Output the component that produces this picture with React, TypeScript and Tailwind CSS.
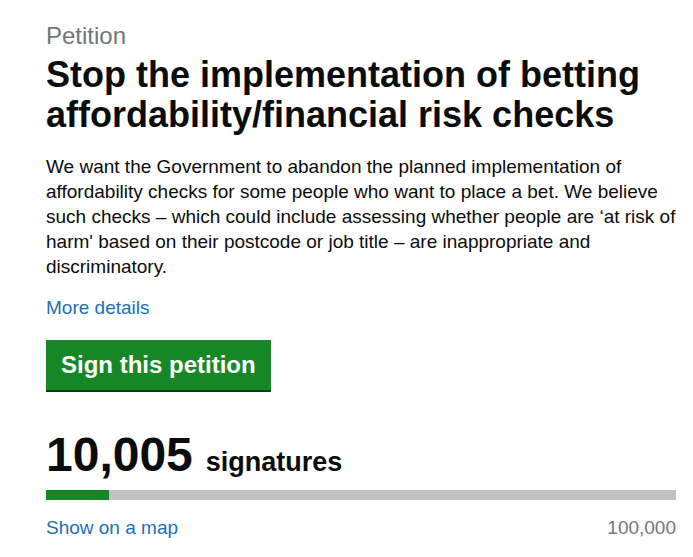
// Petition page header: title, summary, sign button and signature progress
const SIGNATURES = 10005;
const TARGET = 100000;

function SignatureCount() {
  const percent = Math.min(100, (SIGNATURES / TARGET) * 100);
  return (
    <div>
      <div className="mt-[41px] flex items-baseline text-[#0b0c0c]">
        <span className="text-[48px] font-bold leading-[48px]">{SIGNATURES.toLocaleString('en-GB')}</span>
        <span className="ml-[13px] text-[27px] font-bold leading-[30px]">signatures</span>
      </div>
      <div className="mt-[11px] h-[10px] w-full bg-[#bfc1c3]">
        <div className="h-full bg-[#178726]" style={{ width: `${percent}%` }}></div>
      </div>
      <div className="mt-[15px] flex justify-between text-[19px] leading-[25px]">
        <a href="#" className="text-[#1d70b8]">Show on a map</a>
        <span className="text-[#6f777b]">{TARGET.toLocaleString('en-GB')}</span>
      </div>
    </div>
  );
}

function App() {
  return (
    <div className="min-h-screen bg-white pl-[46px] pr-[17px] pt-[21px] font-['Liberation_Sans',Arial,sans-serif] text-[#0b0c0c]">
      <p className="text-[24px] leading-[30px] text-[#6f777b]">Petition</p>
      <h1 className="mt-[4px] text-[36px] font-bold leading-[40px]">
        Stop the implementation of betting affordability/financial risk checks
      </h1>
      <p className="mt-[19px] text-[19px] leading-[25px]">
        We want the Government to abandon the planned implementation of affordability checks for some people who
        want to place a bet. We believe such checks – which could include assessing whether people are ‘at risk of
        harm' based on their postcode or job title – are inappropriate and discriminatory.
      </p>
      <p className="mt-4 text-[19px] leading-[25px]">
        <a href="#" className="text-[#1d70b8]">More details</a>
      </p>
      <button className="mt-5 flex h-[50px] items-center bg-[#178726] px-[15px] text-[24px] font-bold text-white shadow-[0_2px_0_#0b3b16]">
        Sign this petition
      </button>
      <SignatureCount />
    </div>
  );
}

export default App;
